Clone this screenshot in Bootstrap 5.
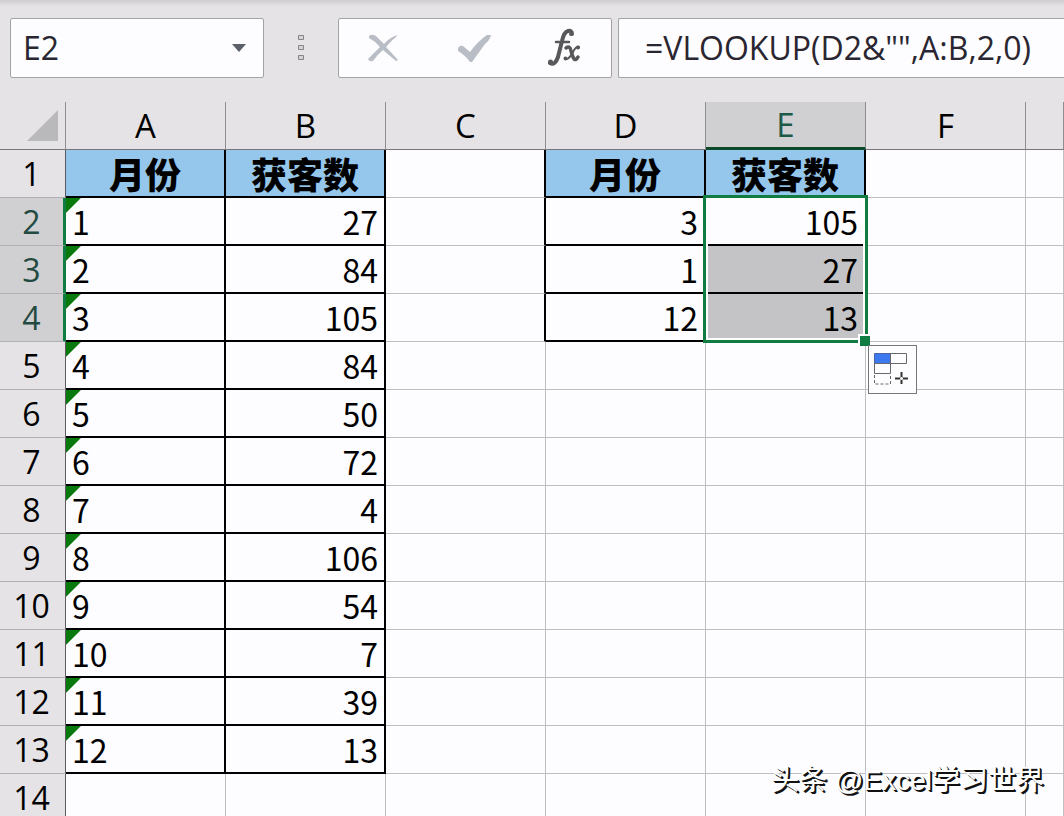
<!DOCTYPE html>
<html lang="zh-CN">
<head>
<meta charset="utf-8">
<meta name="viewport" content="width=device-width, initial-scale=1">
<title>VLOOKUP</title>
<link href="https://cdn.jsdelivr.net/npm/bootstrap@5.3.0/dist/css/bootstrap.min.css" rel="stylesheet">
<style>
  :root { --chrome:#e5e3e5; --line:#a3a3a5; --grid:#bfbfc2; --green:#107c41; }
  body { background:#fdfcfe; color:#000; font-family:"Open Sans","Noto Sans CJK SC",sans-serif; }
  .sheet-app { height:100vh; }
  .formula-row { height:102px; padding:18px 0 24px 10px; background:linear-gradient(#cdccce,var(--chrome) 6px); }
  .bar-box { height:60px; background:#fdfcfe; border:1px solid var(--line); border-radius:2px; }
  .name-box { width:254px; }
  .bar-box input { font-weight:400; font-size:32px; line-height:40px; color:#2a2631; background:none; border:0; outline:0; min-width:0; }
  .name-box input { padding-left:12px; }
  .formula-box input { padding-left:26px; }
  .tools { width:274px; }
  .formula-box { margin-left:6px; border-right:0; border-radius:2px 0 0 2px; }
  .plain-btn { background:none; border:0; padding:0; display:flex; align-items:center; justify-content:center; }
  .grip { width:74px; }
  .grid-table { table-layout:fixed; width:100%; border-collapse:separate; border-spacing:0; }
  .grid-table th, .grid-table td { height:48px; padding:0 6px; line-height:46px; white-space:nowrap; border-right:1px solid var(--grid); border-bottom:1px solid var(--grid); }
  .grid-table thead th { background:var(--chrome); font-size:33px; font-weight:400; text-align:center; border-right-color:#8e8e90; border-bottom-color:#77777a; }
  .grid-table tbody th { background:var(--chrome); font-size:32px; font-weight:400; text-align:center; padding:0 2px 0 0; border-right-color:#5b5b5e; border-bottom-color:#b0b0b3; }
  .grid-table td { font-family:"Noto Sans CJK SC",sans-serif; font-size:32px; text-align:right; position:relative; }
  .grid-table .picked { background:#d0cfd1; color:#1d5a48; }
  .grid-table thead .picked { border-bottom:3px solid #0c4a2b; line-height:44px; }
  .grid-table tbody .picked { border-right:3px solid var(--green); padding:0; color:#234a40; }
  .grid-table .title-cell { background:#95c6eb; font-size:36px; line-height:44px; font-weight:900; text-align:center; }
  .grid-table .edge-r { border-right:2px solid #000; }
  .grid-table .edge-b { border-bottom:2px solid #000; }
  .grid-table .num-text { text-align:left; background:linear-gradient(135deg,#087a0c 10px,transparent 11px); }
  .grid-table .shaded { background:#c4c3c5; }
  .selection { position:absolute; z-index:1; left:-3px; right:-4px; top:-3px; height:148px; border:3px solid var(--green); box-shadow:inset 0 0 0 2px #fff; pointer-events:none; }
  .fill-handle { position:absolute; right:-5px; bottom:-6px; width:12px; height:12px; background:var(--green); border:solid #fff; border-width:2px 0 0 2px; }
  .fill-options { position:absolute; left:2px; top:3px; width:49px; height:49px; padding:0 4px 4px 0; background:#fdfcfe; border:1px solid #77777a; z-index:2; }
  .corner-btn { width:100%; height:46px; }
  .watermark { position:absolute; right:20px; bottom:16px; font:400 28px/38px "Liberation Sans","Noto Sans CJK SC",sans-serif; color:#fff; text-shadow:1px 1px 0 #111,2px 2px 0 #111; }
</style>
</head>
<body>
<main class="sheet-app position-relative overflow-hidden">
  <div class="formula-row d-flex">
    <div class="bar-box name-box d-flex align-items-center flex-shrink-0">
      <input class="flex-grow-1" id="nameBox" aria-label="名称框" value="E2" size="4">
      <button class="plain-btn px-3" type="button" aria-label="展开名称框"><svg width="16" height="10" viewBox="0 0 16 10"><path d="M1 1h14L8 9z" fill="#5b6069"/></svg></button>
    </div>
    <div class="grip d-flex justify-content-center align-items-center flex-shrink-0">
      <svg width="8" height="28" viewBox="0 0 8 28" fill="#d4d3d5" stroke="#858589"><path d="M1.500 1.500h5v4h-5zM1.500 11.500h5v4h-5zM1.500 21.500h5v4h-5z"/></svg>
    </div>
    <div class="bar-box tools d-flex flex-shrink-0">
      <button class="plain-btn flex-fill" type="button" aria-label="取消"><svg width="32" height="30" viewBox="0 0 32 30"><path d="M1 3Q5 0 9 4L16 11Q22 4 30 2Q24 7 18 14L30 27L28 28L15 17Q9 22 5 28Q1 29 0 26Q6 20 12 14Q7 8 1 5z" fill="#b9bdc5"/></svg></button>
      <button class="plain-btn flex-fill" type="button" aria-label="输入"><svg width="34" height="30" viewBox="0 0 34 30"><path d="M1 16Q2 12 6 13L13 19Q21 8 30 2H34Q33 7 28 11L15 29H13Q8 22 1 18z" fill="#b9bdc5"/></svg></button>
      <button class="plain-btn flex-fill" type="button" aria-label="插入函数"><svg width="34" height="40" viewBox="0 0 34 40" fill="none" stroke="#58575a" stroke-linecap="round"><path d="M24 6Q24 2 20 3Q16 4 14 13L10 29Q7 38 2 35" stroke-width="4"/><path d="M8 14H21" stroke-width="2.500"/><circle cx="2.500" cy="34" r="1.500" stroke-width="2"/><circle cx="23" cy="6" r="1" stroke-width="2"/><path d="M18 20Q22 17 23 23L25 29Q27 34 30 29" stroke-width="3.500"/><path d="M31 19Q28 18 25 24Q21 32 17 31" stroke-width="2"/><circle cx="30" cy="19.500" r="1" stroke-width="2"/><circle cx="17.500" cy="30.500" r="1" stroke-width="2"/></svg></button>
    </div>
    <div class="bar-box formula-box d-flex align-items-center flex-grow-1">
      <input class="w-100" aria-label="编辑栏" value="=VLOOKUP(D2&amp;&quot;&quot;,A:B,2,0)">
    </div>
  </div>

  <table class="grid-table">
    <colgroup><col style="width:66px"><col style="width:160px"><col style="width:160px"><col style="width:160px"><col style="width:160px"><col style="width:160px"><col style="width:160px"><col></colgroup>
    <thead>
      <tr><th><button class="plain-btn corner-btn justify-content-end" type="button" aria-label="全选"><svg width="32" height="31" viewBox="0 0 32 31"><path d="M31 0V31H0z" fill="#b9b8ba"/></svg></button></th><th>A</th><th>B</th><th>C</th><th>D</th><th class="picked">E</th><th>F</th><th></th></tr>
    </thead>
    <tbody>
      <tr><th>1</th><td class="title-cell edge-r edge-b">月份</td><td class="title-cell edge-r edge-b">获客数</td><td class="edge-r"></td><td class="title-cell edge-r edge-b">月份</td><td class="title-cell edge-r edge-b">获客数</td><td></td><td></td></tr>
      <tr><th class="picked">2</th><td class="num-text edge-r edge-b">1</td><td class="edge-r edge-b">27</td><td class="edge-r"></td><td class="edge-r edge-b">3</td><td class="edge-r edge-b">105<div class="selection"><div class="fill-handle"></div></div></td><td></td><td></td></tr>
      <tr><th class="picked">3</th><td class="num-text edge-r edge-b">2</td><td class="edge-r edge-b">84</td><td class="edge-r"></td><td class="edge-r edge-b">1</td><td class="shaded edge-r edge-b">27</td><td></td><td></td></tr>
      <tr><th class="picked">4</th><td class="num-text edge-r edge-b">3</td><td class="edge-r edge-b">105</td><td class="edge-r"></td><td class="edge-r edge-b">12</td><td class="shaded edge-r edge-b">13</td><td></td><td></td></tr>
      <tr><th>5</th><td class="num-text edge-r edge-b">4</td><td class="edge-r edge-b">84</td><td></td><td></td><td></td><td><button class="plain-btn fill-options" type="button" aria-label="自动填充选项"><svg width="36" height="36" viewBox="0 0 36 36" fill="none" stroke="#68686c"><path d="M1.500 3.500h16v10h-16z" fill="#3c78f0" stroke="#4a66a8"/><path d="M17.500 3.500h16v10h-16zM1.500 13.500h16v10h-16z"/><path d="M1.500 25v9h16v-9" stroke-dasharray="3 2"/><path d="M28.500 22v12M22 28.500h13" stroke="#333" stroke-width="2"/><circle cx="28.500" cy="28.500" r="1.500" fill="#fff" stroke="none"/></svg></button></td><td></td></tr>
      <tr><th>6</th><td class="num-text edge-r edge-b">5</td><td class="edge-r edge-b">50</td><td></td><td></td><td></td><td></td><td></td></tr>
      <tr><th>7</th><td class="num-text edge-r edge-b">6</td><td class="edge-r edge-b">72</td><td></td><td></td><td></td><td></td><td></td></tr>
      <tr><th>8</th><td class="num-text edge-r edge-b">7</td><td class="edge-r edge-b">4</td><td></td><td></td><td></td><td></td><td></td></tr>
      <tr><th>9</th><td class="num-text edge-r edge-b">8</td><td class="edge-r edge-b">106</td><td></td><td></td><td></td><td></td><td></td></tr>
      <tr><th>10</th><td class="num-text edge-r edge-b">9</td><td class="edge-r edge-b">54</td><td></td><td></td><td></td><td></td><td></td></tr>
      <tr><th>11</th><td class="num-text edge-r edge-b">10</td><td class="edge-r edge-b">7</td><td></td><td></td><td></td><td></td><td></td></tr>
      <tr><th>12</th><td class="num-text edge-r edge-b">11</td><td class="edge-r edge-b">39</td><td></td><td></td><td></td><td></td><td></td></tr>
      <tr><th>13</th><td class="num-text edge-r edge-b">12</td><td class="edge-r edge-b">13</td><td></td><td></td><td></td><td></td><td></td></tr>
      <tr><th>14</th><td></td><td></td><td></td><td></td><td></td><td></td><td></td></tr>
    </tbody>
  </table>
  <div class="watermark">头条 @Excel学习世界</div>
</main>
<script src="https://cdn.jsdelivr.net/npm/bootstrap@5.3.0/dist/js/bootstrap.bundle.min.js"></script>
</body>
</html>
